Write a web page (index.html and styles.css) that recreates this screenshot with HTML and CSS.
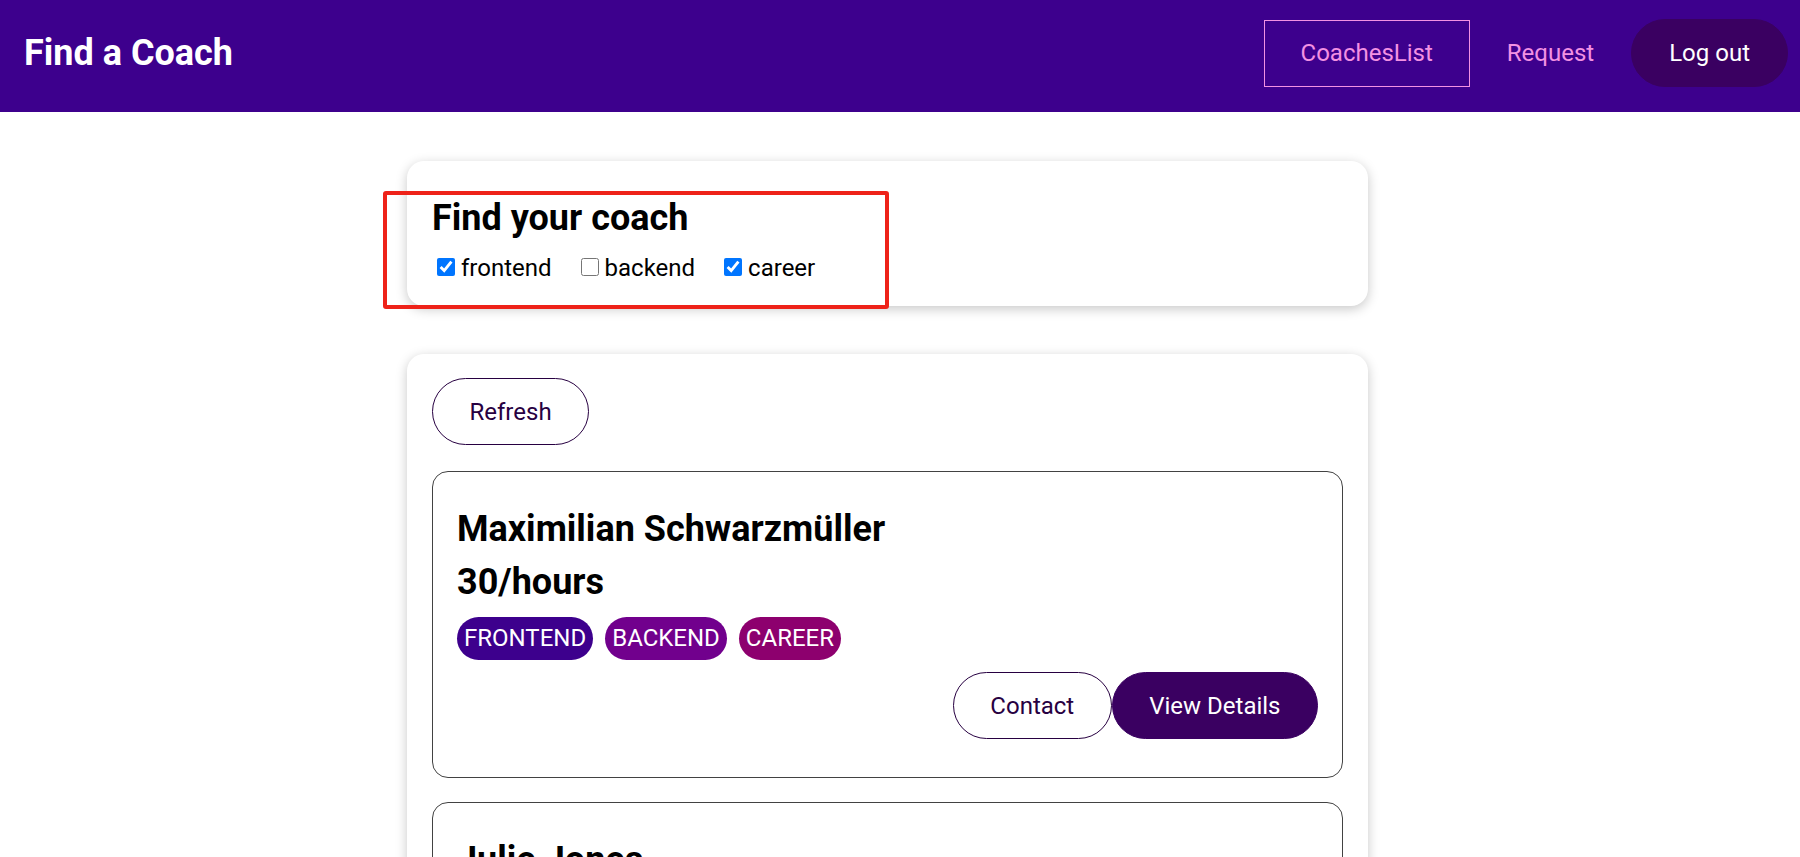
FILE: index.html
```html
<!DOCTYPE html>
<html lang="en">
<head>
<meta charset="utf-8">
<title>Find a Coach</title>
<link rel="stylesheet" href="styles.css">
</head>
<body>
<header class="site-header">
  <h1 class="brand">Find a Coach</h1>
  <nav class="nav">
    <a class="nav-link active" href="#">CoachesList</a>
    <a class="nav-link" href="#">Request</a>
    <button class="nav-btn" type="button">Log out</button>
  </nav>
</header>
<main class="page">
  <section class="card filter-card">
    <h2 class="filter-title">Find your coach</h2>
    <div class="filter-options">
      <label class="filter-option"><input type="checkbox" checked><span>frontend</span></label>
      <label class="filter-option"><input type="checkbox"><span>backend</span></label>
      <label class="filter-option"><input type="checkbox" checked><span>career</span></label>
    </div>
    <div class="annotation"></div>
  </section>
  <section class="card list-card">
    <div class="controls"><button class="btn btn-outline" type="button">Refresh</button></div>
    <ul class="coach-list">
      <li class="coach">
        <h3 class="coach-name">Maximilian Schwarzmüller</h3>
        <h4 class="coach-rate">30/hours</h4>
        <div class="badges">
          <span class="badge frontend">FRONTEND</span>
          <span class="badge backend">BACKEND</span>
          <span class="badge career">CAREER</span>
        </div>
        <div class="actions">
          <button class="btn btn-outline" type="button">Contact</button>
          <button class="btn btn-fill" type="button">View Details</button>
        </div>
      </li>
      <li class="coach">
        <h3 class="coach-name">Julie Jones</h3>
        <h4 class="coach-rate">30/hours</h4>
        <div class="badges">
          <span class="badge career">CAREER</span>
          <span class="badge frontend">FRONTEND</span>
        </div>
        <div class="actions">
          <button class="btn btn-outline" type="button">Contact</button>
          <button class="btn btn-fill" type="button">View Details</button>
        </div>
      </li>
    </ul>
  </section>
</main>
</body>
</html>
```

FILE: styles.css
```css
* { box-sizing: border-box; }
html { font-family: Roboto, "Liberation Sans", sans-serif; }
body { margin: 0; background: #fff; color: #000; }

.site-header {
  height: 112px;
  background: #3d008d;
  display: flex;
  align-items: center;
  justify-content: space-between;
  padding: 0 12px 6px 24px;
}
.brand { margin: 0; color: #fff; font-size: 36px; font-weight: 700; line-height: 1; }
.nav { display: flex; align-items: center; }
.nav-link {
  display: block;
  height: 67px;
  line-height: 65px;
  padding: 0 36px;
  border: 1px solid transparent;
  color: #f391e3;
  font-size: 24px;
  text-decoration: none;
}
.nav-link.active { border-color: #f391e3; }
.nav-btn {
  height: 68px;
  padding: 0 37px;
  border: 1px solid #3a0061;
  background: #3a0061;
  color: #fff;
  font: inherit;
  font-size: 24px;
  border-radius: 34px;
}

.page { padding: 49px 0 0 407px; }
.card {
  width: 961px;
  background: #fff;
  border-radius: 17px;
  box-shadow: 0 3px 12px rgba(0, 0, 0, 0.22);
  padding: 24px 25px;
}
.filter-card { position: relative; }
.filter-title { margin: 12px 0 15px; font-size: 36px; font-weight: 700; line-height: 42px; }
.filter-options { display: flex; align-items: center; height: 28px; font-size: 24px; }
.filter-option { display: flex; align-items: center; margin-right: 24px; }
.filter-option input { width: 18px; height: 18px; margin: -2px 6px 0 5px; }
.annotation {
  position: absolute;
  left: -24px;
  top: 30px;
  width: 506px;
  height: 118px;
  border: 4px solid #ee2219;
  border-radius: 3px;
}

.list-card { margin-top: 48px; }
.btn {
  font: inherit;
  font-size: 24px;
  line-height: 28px;
  padding: 18.5px 36.5px;
  border-radius: 40px;
  border: 1px solid #3a0061;
  cursor: pointer;
}
.btn-outline { background: transparent; color: #270041; border-color: #270041; }
.btn-fill { background: #3a0061; color: #fff; }

.coach-list { list-style: none; margin: 0; padding: 0; }
.coach {
  margin-top: 26px;
  border: 1px solid #424242;
  border-radius: 16px;
  padding: 24px;
}
.coach + .coach { margin-top: 24px; }
.coach-name { margin: 12px 0 11px; font-size: 36px; line-height: 42px; }
.coach-rate { margin: 0; font-size: 36px; line-height: 42px; }
.badges { display: flex; margin: 14px 0 12px; }
.badge {
  font-size: 24px;
  line-height: 27px;
  padding: 8px 7px;
  border-radius: 22px;
  color: #fff;
  margin-right: 12px;
}
.frontend { background: #3d008d; }
.backend { background: #71008d; }
.career { background: #8d006e; }
.actions { display: flex; justify-content: flex-end; margin-bottom: 14px; }
```
